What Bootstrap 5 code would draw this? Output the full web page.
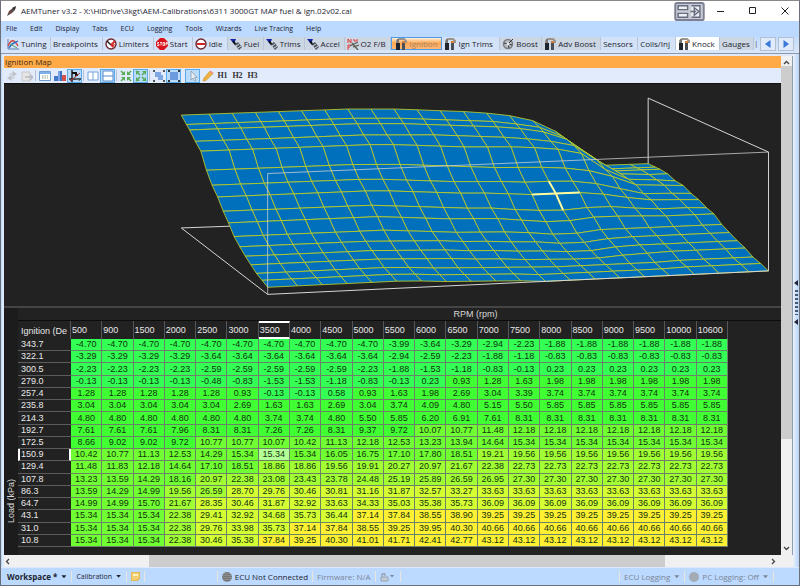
<!DOCTYPE html>
<html lang="en">
<head>
<meta charset="utf-8">
<meta name="viewport" content="width=device-width, initial-scale=1">
<title>AEMTuner v3.2</title>
<link href="https://cdn.jsdelivr.net/npm/bootstrap@5.3.0/dist/css/bootstrap.min.css" rel="stylesheet">
<style>
  body { font: 8px/12px "Open Sans", "Noto Sans", sans-serif; color: #1c2430; background: #bcd9ff; }
  .window { border: 1px solid #6b7078; border-top-color: #8a8a8a; }
  button { font: inherit; color: inherit; background: none; border: 0; padding: 0; }
  svg { display: block; flex: none; }
  .i12 { width: 12px; height: 12px; }
  .title-bar { height: 20px; background: #fff; padding-left: 5px; }
  .title-bar .win-buttons { margin-right: 10px; }
  .title-bar .swap { margin-right: 12px; }
  .menu-bar { height: 16px; padding-left: 5px; gap: 13px; font-size: 7px; }
  .tab-strip { height: 17px; background: linear-gradient(#c3dcfb, #d9e7fa); border-bottom: 1px solid #8d99aa; padding: 0 5px 0 4px; }
  .tab-grid { display: grid; grid-template-columns: 46fr 52fr 51fr 39fr 35fr 36fr 41fr 40fr 47fr 51fr 58fr 42fr 59fr 37fr 38fr 44fr 34fr; }
  .tab-grid button { display: flex; align-items: center; gap: 2px; padding-left: 2px; height: 13px; white-space: nowrap; background: #d3e2f7; border-right: 1px solid #b9c6d8; min-width: 0; }
  .tab-grid .grayed { background: #cdd6e3; }
  .tab-grid .lit { background: #fff; }
  .tab-grid .current { background: linear-gradient(#fff0dc, #ffa751 45%, #ffb877); border: 1px solid #4e9be6; color: #a08468; padding-left: 3px; }
  .tab-end { width: 4px; color: #555; }
  .step { width: 16px; height: 14px; border: 1px solid #b4c0d0; background: #dfeafa; margin-left: 2px; display: grid; place-items: center; }
  .work { margin-left: 1px; border-left: 2px solid #dfe9f8; border-top: 2px solid #dfe9f8; background: #222; }
  .caption-bar { background: #ffaa47; height: 12px; padding-left: 1px; color: #3a2a18; }
  .tool-row { height: 16px; background: #e2ebfb; border-bottom: 1px solid #111; }
  .tool-row button { width: 15px; height: 14px; display: grid; place-items: center; border: 1px solid transparent; }
  .tool-row .on { background: #b9dcfa; border-color: #5aa9e8; }
  .tool-row .bar { width: 1px; height: 11px; background: #b6c2d4; margin: 0 1px; }
  .tool-row .hb { font: bold 8px/12px "Liberation Serif", serif; color: #333; }
  .graph { background: #222; min-height: 120px; border-bottom: 2px solid #444; }
  .axis-x { height: 13px; padding-left: 152px; font: 9px/13px "Liberation Sans", sans-serif; color: #d8d8d8; border-bottom: 1px solid #0c0c0c; }
  .axis-y { width: 14px; padding-bottom: 32px; font: 9px/12px "Liberation Sans", sans-serif; color: #d8d8d8; background: #1c1c1c; }
  .axis-y span { writing-mode: vertical-rl; transform: rotate(180deg); }
  .grid-wrap { padding-bottom: 8px; background: #222; }
  .ign { table-layout: fixed; border-collapse: separate; border-spacing: 0; width: 710px; height: 226px; font: 9px/11px "Liberation Sans", sans-serif; }
  .ign th, .ign td { padding: 0; white-space: nowrap; border: 0 solid #6c8268; }
  .ign td { text-align: center; border-width: 0 1px 1px 0; color: #12320e; }
  .ign th { font-weight: 400; color: #e8e8e8; padding-left: 3px; }
  .ign col:first-child { width: 53px; }
  .ign thead tr { height: 18px; }
  .ign thead th { border-right: 1px solid #555; padding-left: 1px; }
  .ign thead th:first-child { padding: 3px 0 0 3px; }
  .ign tbody th { border-bottom: 1px solid #5c5c5c; }
  .ign thead .picked { border-top: 2px solid #fff; border-bottom: 2px solid #fff; }
  .ign tbody .picked { border-left: 2px solid #fff; border-right: 2px solid #fff; padding-left: 1px; }
  .b0 { background: #33ff55; } .b1 { background: #40ff33; } .b2 { background: #70ff33; }
  .b3 { background: #a2ff33; } .b4 { background: #d5ff33; } .b5 { background: #fff033; }
  .ign .here { background: #b4ff96; }
  .vbar { width: 12px; background: #f0f0f0; border-right: 1px solid #909dae; padding: 4px 0; }
  .vbar .thumb { flex: 375 1 0; background: #cdcdcd; } .vbar .rest { flex: 107 1 0; }
  .hbar { height: 12px; background: #f0f0f0; }
  .hbar .thumb { flex: 517 1 0; background: #cdcdcd; align-self: stretch; } .hbar .pre { flex: 138 1 0; } .hbar .post { flex: 105 1 0; }
  .dock { width: 6px; background: linear-gradient(90deg, #eaf2fd, #b5d3f8); padding-top: 226px; gap: 4px; }
  .dots { width: 3px; height: 25px; background: repeating-linear-gradient(#47576d 0 2px, transparent 2px 4px); }
  .status { height: 18px; background: #bcd9ff; border-top: 1px solid #dceaff; padding: 0 24px 0 6px; gap: 3px; }
  .status .rule { width: 1px; height: 11px; background: #e9e4dc; margin: 0 1px; }
  .status .dim { color: #7b8694; }
  .status .sm7 { font-size: 7px; }
  .tri { width: 5px; height: 3px; background: currentColor; clip-path: polygon(0 0, 100% 0, 50% 100%); display: inline-block; margin: 0 1px 1px 4px; vertical-align: middle; }
  .orb { width: 10px; height: 10px; border-radius: 50%; background: repeating-linear-gradient(#777 0 1px, #8c8c8c 1px 2px); }
  .orb.pale { background: #a3abb5; }
</style>
<script src="https://cdn.jsdelivr.net/npm/bootstrap@5.3.0/dist/js/bootstrap.bundle.min.js"></script>
</head>
<body>
<svg width="0" height="0" class="position-absolute" aria-hidden="true">
  <symbol id="nozzle" viewBox="0 0 12 12"><path d="M0 1h6L4 6z" fill="#1226b4"/><path d="M3 3l3 4" stroke="#111" stroke-width="2"/><path d="M5 6l3-2 4 5-3 3z" fill="#4d5560"/><path d="M6 8l3-2M8 10l3-2" stroke="#d6dade"/></symbol>
  <symbol id="plug" viewBox="0 0 12 12"><path d="M2 6V3l2-2h5l2 2v2" fill="none" stroke="#99958e" stroke-width="2"/><path d="M1 5h4v7H1z" fill="#20242c"/><path d="M7 4h3v8H7z" fill="#4b4f56"/><path d="M2 1h2v4H2z" fill="#777"/><path d="M7 3h3v2H7z" fill="#d98036"/></symbol>
  <symbol id="gauge" viewBox="0 0 12 12"><circle cx="6" cy="6" r="5" fill="#fff" stroke="#6b2730" stroke-width="1.4"/></symbol>
</svg>

<div class="window vh-100 d-flex flex-column overflow-hidden">
  <header class="title-bar d-flex align-items-center">
    <svg width="11" height="12" viewBox="0 0 11 12"><path d="M1 11l2-5 4-3 2 2-3 3z" fill="#514a46"/><path d="M6 3l4-2-1 4z" fill="#222"/><path d="M3 7l3-1-2 3z" fill="#a8483c"/></svg>
    <span class="ms-1">AEMTuner v3.2 - X:\HiDrive\3kgt\AEM-Calibrations\6311 3000GT MAP fuel &amp; ign.02v02.cal</span>
    <div class="win-buttons ms-auto d-flex align-items-center">
      <button class="swap" aria-label="Move to other display"><svg width="31" height="19" viewBox="0 0 32 20"><rect x="1" y="1" width="30" height="18" rx="2" fill="#c9ccd6" stroke="#7c8090" stroke-width="2"/><path d="M4 4h10v4H4zM4 12h10v4H4zM18 4h9v12h-9" fill="#eef0f5" stroke="#666b7d" stroke-width="1.5"/><path d="M17 10h6M21 6l5 4-5 4z" fill="none" stroke="#666b7d" stroke-width="1.5"/></svg></button>
      <button aria-label="Minimize"><svg width="8" height="8" viewBox="0 0 8 8"><path d="M0 4.500h7" stroke="#222"/></svg></button>
      <button class="ms-4" aria-label="Maximize"><svg width="8" height="8" viewBox="0 0 8 8"><path d="M.5.5h6v6h-6z" fill="none" stroke="#222"/></svg></button>
      <button class="ms-4" aria-label="Close"><svg width="8" height="8" viewBox="0 0 8 8"><path d="M.5.5l7 7M7.500.5l-7 7" stroke="#222"/></svg></button>
    </div>
  </header>
  <nav class="menu-bar d-flex align-items-center" aria-label="Main menu">
    <button>File</button><button>Edit</button><button>Display</button><button>Tabs</button><button>ECU</button><button>Logging</button><button>Tools</button><button>Wizards</button><button>Live Tracing</button><button>Help</button>
  </nav>
  <div class="tab-strip d-flex align-items-start">
    <div class="tab-grid flex-grow-1">
      <button><svg class="i12" viewBox="0 0 12 12"><path d="M1 1v10h11" fill="none" stroke="#5a7fb5"/><path d="M1 8c3-7 6-7 10 0" fill="none" stroke="#d0463c" stroke-width="1.4"/><path d="M2 10c3-6 6-5 9-7" fill="none" stroke="#3573c0" stroke-width="1.4"/><path d="M3 6l7 4" stroke="#5aa36a"/></svg>Tuning</button>
      <button>Breakpoints</button>
      <button><svg class="i12"><use href="#gauge"/><path d="M6 7L2 3" stroke="#222" stroke-width="1.5"/><path d="M6 7l4-4" stroke="#d62a2a" stroke-width="2"/><path d="M5 7l5-1-2 4z" fill="#d62a2a"/></svg>Limiters</button>
      <button><svg class="i12" viewBox="0 0 12 12"><path d="M4 0h4l4 4v4l-4 4H4L0 8V4z" fill="#d9141c"/><path d="M3 4.500H1.500V6H3v1.500H1M4 4.500h2M5 4.500v3M7 4.500h1.500v3H7zM10 7.500v-3h1.500v1.500H10" fill="none" stroke="#fff" stroke-width=".8"/></svg>Start</button>
      <button><svg class="i12"><use href="#gauge"/><path d="M2 6h8" stroke="#d02424" stroke-width="2"/></svg>Idle</button>
      <button class="grayed"><svg class="i12"><use href="#nozzle"/></svg>Fuel</button>
      <button class="grayed"><svg class="i12"><use href="#nozzle"/></svg>Trims</button>
      <button class="grayed"><svg class="i12"><use href="#nozzle"/></svg>Accel</button>
      <button class="grayed"><svg class="i12" viewBox="0 0 12 12"><path d="M1 5V1l3 4V1M1 12V7h3M1 9h2M7 1v2h3V1" fill="none" stroke="#e23a3a"/><path d="M3 8l8-4M5 5l6 7M6 9l6-2" stroke="#5b5b50" stroke-width="1.300"/></svg>O2 F/B</button>
      <button class="current"><svg class="i12"><use href="#plug"/></svg>Ignition</button>
      <button><svg class="i12"><use href="#plug"/></svg>Ign Trims</button>
      <button class="grayed"><svg class="i12" viewBox="0 0 12 12"><circle cx="6" cy="6" r="4.500" fill="#b9bcc0" stroke="#7a7e84" stroke-width="1.500"/><path d="M6 6l5-5M6 6l-4-1M6 6l1 4M6 6l4 1" stroke="#33373c"/><circle cx="6" cy="6" r="1.500" fill="#eee"/></svg>Boost</button>
      <button class="grayed"><svg class="i12"><use href="#plug"/></svg>Adv Boost</button>
      <button>Sensors</button>
      <button>Coils/Inj</button>
      <button class="lit"><svg class="i12"><use href="#plug"/></svg>Knock</button>
      <button class="grayed">Gauges</button>
    </div>
    <span class="tab-end text-end">|</span>
    <button class="step" aria-label="Previous tabs"><svg width="6" height="8" viewBox="0 0 6 8"><path d="M5.500 0v8L0 4z" fill="#3b78d8"/></svg></button>
    <button class="step" aria-label="Next tabs"><svg width="6" height="8" viewBox="0 0 6 8"><path d="M.5 0v8L6 4z" fill="#3b78d8"/></svg></button>
  </div>

  <div class="d-flex flex-grow-1 overflow-hidden">
    <main class="work d-flex flex-column flex-grow-1 overflow-hidden">
      <div class="d-flex flex-grow-1 overflow-hidden">
        <div class="d-flex flex-column flex-grow-1 overflow-hidden">
          <div class="caption-bar">Ignition Map</div>
          <div class="tool-row d-flex align-items-center" role="toolbar" aria-label="Map tools">
            <button aria-label="Refresh"><svg class="i12" viewBox="0 0 12 12"><path d="M3 4h5M7 2l3 2-3 2zM9 8H4M5 6L2 8l3 2z" fill="#bfc3c8" stroke="#bfc3c8" stroke-width="1.200"/></svg></button>
            <button aria-label="Send"><svg class="i12" viewBox="0 0 12 12"><path d="M1 2h8v9H1z" fill="#e5e5e5" stroke="#c5c8cc"/><path d="M4 7h7M9 5l3 2-3 3" fill="none" stroke="#b6babf" stroke-width="1.300"/></svg></button>
            <span class="bar"></span>
            <button aria-label="Table"><svg class="i12" viewBox="0 0 12 12"><path d="M.5 1.500h11v9H.5z" fill="#fff" stroke="#6c9cd4"/><path d="M1 3h10" stroke="#7eb0ea" stroke-width="2"/><path d="M3 6h6M3 8h6" stroke="#87a37e" stroke-dasharray="1.500 1"/></svg></button>
            <button aria-label="Bar chart"><svg class="i12" viewBox="0 0 12 12"><path d="M0 6h4v5H0z" fill="#4377c8"/><path d="M4 1h4v10H4z" fill="#3f6fc0"/><path d="M8 5h4v6H8z" fill="#d0524a"/><path d="M4 1h2v10H4z" fill="#7aa5e6"/></svg></button>
            <button class="on" aria-label="Graph"><svg class="i12" viewBox="0 0 12 12"><path d="M3 0v12M0 9h12" fill="none" stroke="#222" stroke-width="1.500"/><path d="M3 3h4v2h2" fill="none" stroke="#111" stroke-width="2"/><path d="M1 11l10-8" stroke="#c03030"/><path d="M5 7l6 4" fill="none" stroke="#777"/></svg></button>
            <span class="bar"></span>
            <button aria-label="Split vertically"><svg class="i12" viewBox="0 0 12 12"><path d="M1 2h10v8H1zM6 2v8" fill="#fff" stroke="#76a3dc"/></svg></button>
            <button class="on" aria-label="Split horizontally"><svg class="i12" viewBox="0 0 12 12"><path d="M1 1h10v10H1zM1 6h10" fill="#fff" stroke="#5b8cd0"/></svg></button>
            <span class="bar"></span>
            <button aria-label="Shrink"><svg class="i12" viewBox="0 0 12 12"><path d="M1 1l3 3M11 1L8 4M1 11l3-3M11 11L8 8" stroke="#58ad56" stroke-width="1.500"/><path d="M1 5h4V1zM7 1v4h4zM1 7h4v4zM7 11V7h4z" fill="#58ad56"/></svg></button>
            <button class="on" aria-label="Expand"><svg class="i12" viewBox="0 0 12 12"><path d="M1 5V1h4zM7 1h4v4zM1 7v4h4zM7 11h4V7z" fill="#58ad56"/><path d="M1 1l4 4M11 1L7 5M1 11l4-4M11 11L7 7" stroke="#58ad56" stroke-width="1.500"/></svg></button>
            <span class="bar"></span>
            <button aria-label="Group"><svg class="i12" viewBox="0 0 12 12"><path d="M2 2h6v5H2zM5 5h5v5H5z" fill="#7fa8e2"/><path d="M0 1h2M10 1h2M0 11h2M10 11h2" stroke="#555" stroke-width="2"/></svg></button>
            <button class="on" aria-label="Fit"><svg class="i12" viewBox="0 0 12 12"><path d="M2 2h8v8H2z" fill="#6c9be0"/><path d="M0 1h2M10 1h2M0 11h2M10 11h2" stroke="#333" stroke-width="2"/></svg></button>
            <button class="on ms-1" aria-label="Select"><svg class="i12" viewBox="0 0 12 12"><path d="M4 1v9l2-2 1.500 3 1.500-.6L7.500 7.500H10z" fill="#e9eef5" stroke="#8c9cb0" stroke-width=".8"/></svg></button>
            <button aria-label="Draw"><svg class="i12" viewBox="0 0 12 12"><path d="M1 11l1-3 6-7 3 2.500-7 7z" fill="#f0b13e" stroke="#c98b2a" stroke-width=".6"/><path d="M8 1l3 2.500" stroke="#e98b8b" stroke-width="1.500"/></svg></button>
            <button class="hb">H1</button><button class="hb">H2</button><button class="hb">H3</button>
          </div>
          <div class="graph flex-grow-1 overflow-hidden">
            <svg id="surface" class="w-100 h-100" viewBox="4 84 778 220" role="img" aria-label="Ignition surface"></svg>
          </div>
          <div class="d-flex">
            <div class="axis-y d-flex align-items-end justify-content-center"><span>Load (kPa)</span></div>
            <div class="flex-grow-1 overflow-hidden grid-wrap">
              <div class="axis-x text-center">RPM (rpm)</div>
              <table class="ign"><colgroup><col></colgroup><thead></thead><tbody></tbody></table>
            </div>
          </div>
        </div>
        <div class="vbar d-flex flex-column align-items-center">
          <svg width="7" height="6" viewBox="0 0 7 6"><path d="M1 4l2.500-2.500L6 4" fill="none" stroke="#444" stroke-width="1.300"/></svg>
          <div class="thumb w-100"></div><div class="rest"></div>
          <svg width="7" height="6" viewBox="0 0 7 6"><path d="M1 2l2.500 2.500L6 2" fill="none" stroke="#444" stroke-width="1.300"/></svg>
        </div>
      </div>
      <div class="hbar d-flex align-items-center">
        <svg width="7" height="7" viewBox="0 0 7 7"><path d="M5 1L2.500 3.500 5 6" fill="none" stroke="#444" stroke-width="1.300"/></svg>
        <div class="pre"></div><div class="thumb"></div><div class="post"></div>
        <svg class="me-3" width="7" height="7" viewBox="0 0 7 7"><path d="M2 1l2.500 2.500L2 6" fill="none" stroke="#444" stroke-width="1.300"/></svg>
      </div>
    </main>
    <aside class="dock d-flex flex-column align-items-center">
      <svg width="4" height="6" viewBox="0 0 4 6"><path d="M4 0v6L0 3z" fill="#223"/></svg>
      <div class="dots"></div>
      <svg width="4" height="6" viewBox="0 0 4 6"><path d="M4 0v6L0 3z" fill="#223"/></svg>
    </aside>
  </div>

  <footer class="status d-flex align-items-center">
    <button class="fw-bold">Workspace *<span class="tri"></span></button><span class="rule"></span>
    <button class="sm7">Calibration<span class="tri"></span></button><span class="rule"></span>
    <button aria-label="Notes"><svg width="9" height="9" viewBox="0 0 9 9"><path d="M0 0h9v6L6 9H0z" fill="#f3cf72" stroke="#dba53f"/><path d="M2 2h5v2H2z" fill="#fff2bd"/></svg></button><span class="rule"></span>
    <span style="flex:68 1 0"></span>
    <span class="rule"></span><span class="orb"></span><span>ECU Not Connected</span><span class="rule"></span>
    <span class="dim">Firmware: N/A</span><span class="rule"></span>
    <button class="dim d-flex align-items-center" aria-label="Lock"><svg width="10" height="10" viewBox="0 0 10 10"><path d="M1 5h7v4H1z" fill="#c3cbd6" stroke="#98a3b2"/><path d="M2 5V2h3v2" fill="none" stroke="#98a3b2" stroke-width="1.300"/></svg><span class="tri ms-0"></span></button><span class="rule"></span>
    <span style="flex:225 1 0"></span>
    <span class="rule"></span><button class="dim">ECU Logging<span class="tri"></span></button><span class="rule"></span>
    <span class="orb pale"></span><button class="dim">PC Logging: Off<span class="tri"></span></button><span class="rule"></span>
  </footer>
</div>

<script>
// Engine speed breakpoints; each table row is load followed by timing, "v*n" repeats v n times.
const rpm = [500,900,1500,2000,2500,3000,3500,4000,4500,5000,5500,6000,6500,7000,7500,8000,8500,9000,9500,10000,10600];
const rows = `343.7 -4.70*10 -3.99 -3.64 -3.29 -2.94 -2.23 -1.88*6
322.1 -3.29*4 -3.64*6 -2.94 -2.59 -2.23 -1.88 -1.18 -0.83*6
300.5 -2.23*4 -2.59*5 -2.23 -1.88 -1.53 -1.18 -0.83 -0.13 0.23*6
279.0 -0.13*4 -0.48 -0.83 -1.53*2 -1.18 -0.83 -0.13 0.23 0.93 1.28 1.63 1.98*6
257.4 1.28*5 0.93 -0.13*2 0.58 0.93 1.63 1.98 2.69 3.04 3.39 3.74*6
235.8 3.04*5 2.69 1.63*2 2.69 3.04 3.74 4.09 4.80 5.15 5.50 5.85*6
214.3 4.80*6 3.74*2 4.80 5.50 5.85 6.20 6.91 7.61 8.31*7
192.7 7.61*3 7.96 8.31*2 7.26*2 8.31 9.37 9.72 10.07 10.77 11.48 12.18*7
172.5 8.66 9.02*2 9.72 10.77*2 10.07 10.42 11.13 12.18 12.53 13.23 13.94 14.64 15.34*7
150.9 10.42 10.77 11.13 12.53 14.29 15.34*3 16.05 16.75 17.10 17.80 18.51 19.21 19.56*7
129.4 11.48 11.83 12.18 14.64 17.10 18.51 18.86*2 19.56 19.91 20.27 20.97 21.67 22.38 22.73*7
107.8 13.23 13.59 14.29 18.16 20.97 22.38 23.08 23.43 23.78 24.48 25.19 25.89 26.59 26.95 27.30*7
86.3 13.59 14.29 14.99 19.56 26.59 28.70 29.76 30.46 30.81 31.16 31.87 32.57 33.27 33.63*8
64.7 14.99*2 15.70 21.67 28.35 30.46 31.87 32.92 33.63 34.33 35.03 35.38 35.73 36.09*8
43.1 15.34*3 22.38 29.41 32.92 34.68 35.73 36.44 37.14 37.84 38.55 38.90 39.25*8
31.0 15.34*3 22.38 29.76 33.98 35.73 37.14 37.84 38.55 39.25 39.95 40.30 40.66*8
10.8 15.34*3 22.38 30.46 35.38 37.84 39.25 40.30 41.01 41.71 42.41 42.77 43.12*8`
  .split('\n').map(line => {
    const [load, ...rest] = line.trim().split(' ');
    return { load, v: rest.flatMap(t => { const [v, n = 1] = t.split('*'); return Array(+n).fill(v); }) };
  });
const selCol = 6, selRow = 9;
const band = v => v < 0.9 ? 0 : v < 10 ? 1 : v < 18.7 ? 2 : v < 28 ? 3 : v < 37 ? 4 : 5;

document.querySelector('.ign colgroup').insertAdjacentHTML('beforeend', '<col>'.repeat(rpm.length));
document.querySelector('.ign thead').innerHTML = '<tr><th scope="col">Ignition (De</th>' +
  rpm.map((r, i) => `<th scope="col"${i === selCol ? ' class="picked"' : ''}>${r}</th>`).join('') + '</tr>';
document.querySelector('.ign tbody').innerHTML = rows.map((row, j) =>
  `<tr><th scope="row"${j === selRow ? ' class="picked"' : ''}>${row.load}</th>` +
  row.v.map((v, i) => `<td class="b${band(+v)}${i === selCol && j === selRow ? ' here' : ''}">${v}</td>`).join('') + '</tr>').join('');

// Project (u: high to low rpm, w: high to low load, h: timing) into the drawing.
const mix = (a, b, t) => a + (b - a) * t;
function project(u, w, h) {
  const x = mix(mix(268, 769.5, u), mix(181.5, 649, u), w);
  const y = mix(mix(293.5, 270, u), mix(227, 210, u), w);
  return [x, y - h * mix(mix(121, 119, u), 113, w)];
}
const at = (i, j) => project((10600 - rpm[i]) / 10100, (343.7 - rows[j].load) / 332.9, (+rows[j].v[i] + 4.7) / 47.82);
const pts = a => a.map(p => p.map(n => n.toFixed(1)).join()).join(' ');
const edge = (a, extra = '') => `<polyline points="${pts(a)}" fill="none" stroke="#d6d6d6" stroke-width="1" ${extra}/>`;
const P = project;
let art = edge([P(0,0,0), P(0,1,0), P(1,1,0)]) + edge([P(1,1,0), P(1,1,1), P(1,0,1)]);
for (let j = rows.length - 1; j > 0; j--)
  for (let i = 0; i < rpm.length - 1; i++)
    art += `<polygon points="${pts([at(i, j), at(i + 1, j), at(i + 1, j - 1), at(i, j - 1)])}" fill="#0070bd" stroke="#c6d222" stroke-width=".8"/>`;
art += edge([P(1,0,1), P(1,0,0), P(0,0,0)]) + edge([P(0,0,0), P(0,0,1), P(1,0,1)], 'stroke-opacity=".75"');
const cross = a => `<polyline points="${pts(a)}" fill="none" stroke="#fffca0" stroke-width="2"/>`;
art += cross([at(selCol - 1, selRow), at(selCol, selRow), at(selCol + 1, selRow)]) +
       cross([at(selCol, selRow - 1), at(selCol, selRow), at(selCol, selRow + 1)]);
document.getElementById('surface').innerHTML = art;
</script>
</body>
</html>
